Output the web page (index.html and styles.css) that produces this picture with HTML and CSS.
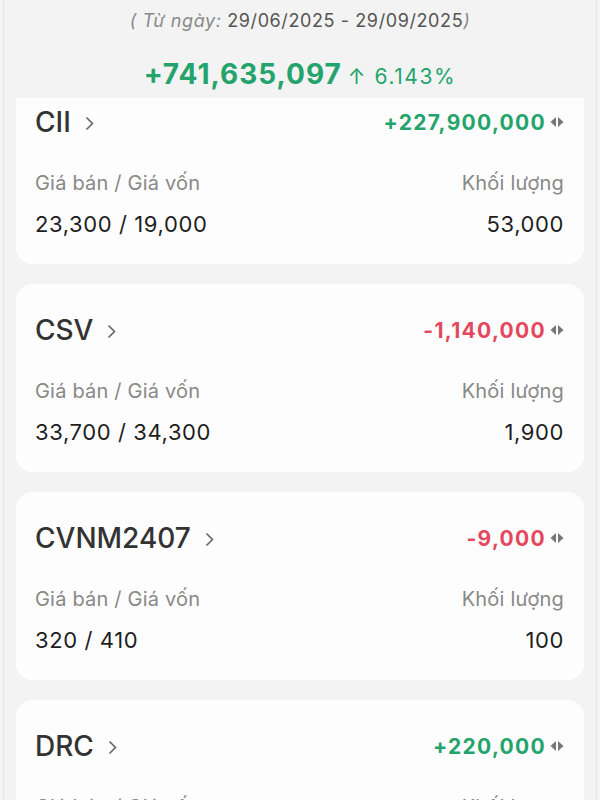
FILE: index.html
```html
<!DOCTYPE html>
<html lang="vi">
  <head>
    <meta charset="UTF-8" />
    <meta name="viewport" content="width=device-width, initial-scale=1.0" />
    <title>Lãi lỗ đã thực hiện</title>
    <link rel="stylesheet" href="styles.css">
  </head>
  <body>
    <div class="screen">
      <div class="summary">
        <p class="range">
          <span class="range-label">( Từ ngày:</span>
          29/06/2025 - 29/09/2025<span class="range-label">)</span>
        </p>
        <p class="total">
          <span class="total-value">+741,635,097</span>
          <span class="total-pct">&#8593; 6.143%</span>
        </p>
      </div>

      <div class="list">
        <div class="card">
          <div class="card-head">
            <span class="symbol">CII
              <svg class="chev" width="9" height="15" viewBox="0 0 9 15"><path d="M1.5 1.5 L7.5 7.5 L1.5 13.5" fill="none" stroke="#666" stroke-width="1.6" /></svg>
            </span>
            <span class="pnl up">+227,900,000
              <svg class="swap" width="14" height="10" viewBox="0 0 14 10"><path d="M6 0 L0.5 5 L6 10 Z M8 0 L13.5 5 L8 10 Z" fill="#777" /></svg>
            </span>
          </div>
          <div class="row label">
            <span>Giá bán / Giá vốn</span>
            <span>Khối lượng</span>
          </div>
          <div class="row value">
            <span>23,300 / 19,000</span>
            <span>53,000</span>
          </div>
        </div>

        <div class="card">
          <div class="card-head">
            <span class="symbol">CSV
              <svg class="chev" width="9" height="15" viewBox="0 0 9 15"><path d="M1.5 1.5 L7.5 7.5 L1.5 13.5" fill="none" stroke="#666" stroke-width="1.6" /></svg>
            </span>
            <span class="pnl down">-1,140,000
              <svg class="swap" width="14" height="10" viewBox="0 0 14 10"><path d="M6 0 L0.5 5 L6 10 Z M8 0 L13.5 5 L8 10 Z" fill="#777" /></svg>
            </span>
          </div>
          <div class="row label">
            <span>Giá bán / Giá vốn</span>
            <span>Khối lượng</span>
          </div>
          <div class="row value">
            <span>33,700 / 34,300</span>
            <span>1,900</span>
          </div>
        </div>

        <div class="card">
          <div class="card-head">
            <span class="symbol">CVNM2407
              <svg class="chev" width="9" height="15" viewBox="0 0 9 15"><path d="M1.5 1.5 L7.5 7.5 L1.5 13.5" fill="none" stroke="#666" stroke-width="1.6" /></svg>
            </span>
            <span class="pnl down">-9,000
              <svg class="swap" width="14" height="10" viewBox="0 0 14 10"><path d="M6 0 L0.5 5 L6 10 Z M8 0 L13.5 5 L8 10 Z" fill="#777" /></svg>
            </span>
          </div>
          <div class="row label">
            <span>Giá bán / Giá vốn</span>
            <span>Khối lượng</span>
          </div>
          <div class="row value">
            <span>320 / 410</span>
            <span>100</span>
          </div>
        </div>

        <div class="card">
          <div class="card-head">
            <span class="symbol">DRC
              <svg class="chev" width="9" height="15" viewBox="0 0 9 15"><path d="M1.5 1.5 L7.5 7.5 L1.5 13.5" fill="none" stroke="#666" stroke-width="1.6" /></svg>
            </span>
            <span class="pnl up">+220,000
              <svg class="swap" width="14" height="10" viewBox="0 0 14 10"><path d="M6 0 L0.5 5 L6 10 Z M8 0 L13.5 5 L8 10 Z" fill="#777" /></svg>
            </span>
          </div>
          <div class="row label">
            <span>Giá bán / Giá vốn</span>
            <span>Khối lượng</span>
          </div>
          <div class="row value">
            <span>5,000 / 4,800</span>
            <span>1,100</span>
          </div>
        </div>
      </div>
    </div>
  </body>
</html>
```

FILE: styles.css
```css
body {
  margin: 0;
  background-color: #f3f3f3;
  font-family: Inter, "Noto Sans", sans-serif;
  color: #222;
  height: 800px;
  overflow: hidden;
}
p {
  margin: 0;
}
.screen {
  margin: 0 3px;
  border-left: 1px solid #e6e6e6;
  border-right: 1px solid #e6e6e6;
  min-height: 800px;
}
.summary {
  position: relative;
  z-index: 1;
  height: 98px;
  background-color: #f3f3f3;
  text-align: center;
}
.range {
  padding-top: 9px;
  font-size: 18px;
  line-height: 24px;
  letter-spacing: 0.6px;
  color: #555;
}
.range-label {
  font-style: italic;
  color: #8a8a8a;
}
.total {
  margin-top: 24px;
  display: flex;
  justify-content: center;
  align-items: baseline;
  gap: 6px;
  color: #24a46c;
}
.total-value {
  font-size: 28px;
  font-weight: 700;
  letter-spacing: 1px;
}
.total-pct {
  font-size: 21px;
  letter-spacing: 1.6px;
}
.list {
  margin-top: -22px;
  padding: 0 12px;
  display: flex;
  flex-direction: column;
  gap: 20px;
}
.card {
  height: 188px;
  box-sizing: border-box;
  padding: 28px 20px 0 19px;
  background-color: #fdfdfd;
  border-radius: 16px;
}
.card-head {
  display: flex;
  justify-content: space-between;
  align-items: center;
  height: 36px;
}
.symbol {
  display: flex;
  align-items: center;
  gap: 14px;
  font-size: 28px;
  font-weight: 500;
  color: #333;
}
.chev {
  margin-top: 2px;
}
.pnl {
  display: flex;
  align-items: center;
  gap: 4px;
  font-size: 21px;
  font-weight: 700;
  letter-spacing: 1.3px;
}
.up {
  color: #24a46c;
}
.down {
  color: #e5485e;
}
.row {
  display: flex;
  justify-content: space-between;
}
.label {
  margin-top: 31px;
  font-size: 20px;
  line-height: 24px;
  letter-spacing: 0.2px;
  color: #888;
}
.value {
  margin-top: 17px;
  font-size: 22px;
  line-height: 24px;
  letter-spacing: 0.6px;
  color: #1e1e1e;
}
```
